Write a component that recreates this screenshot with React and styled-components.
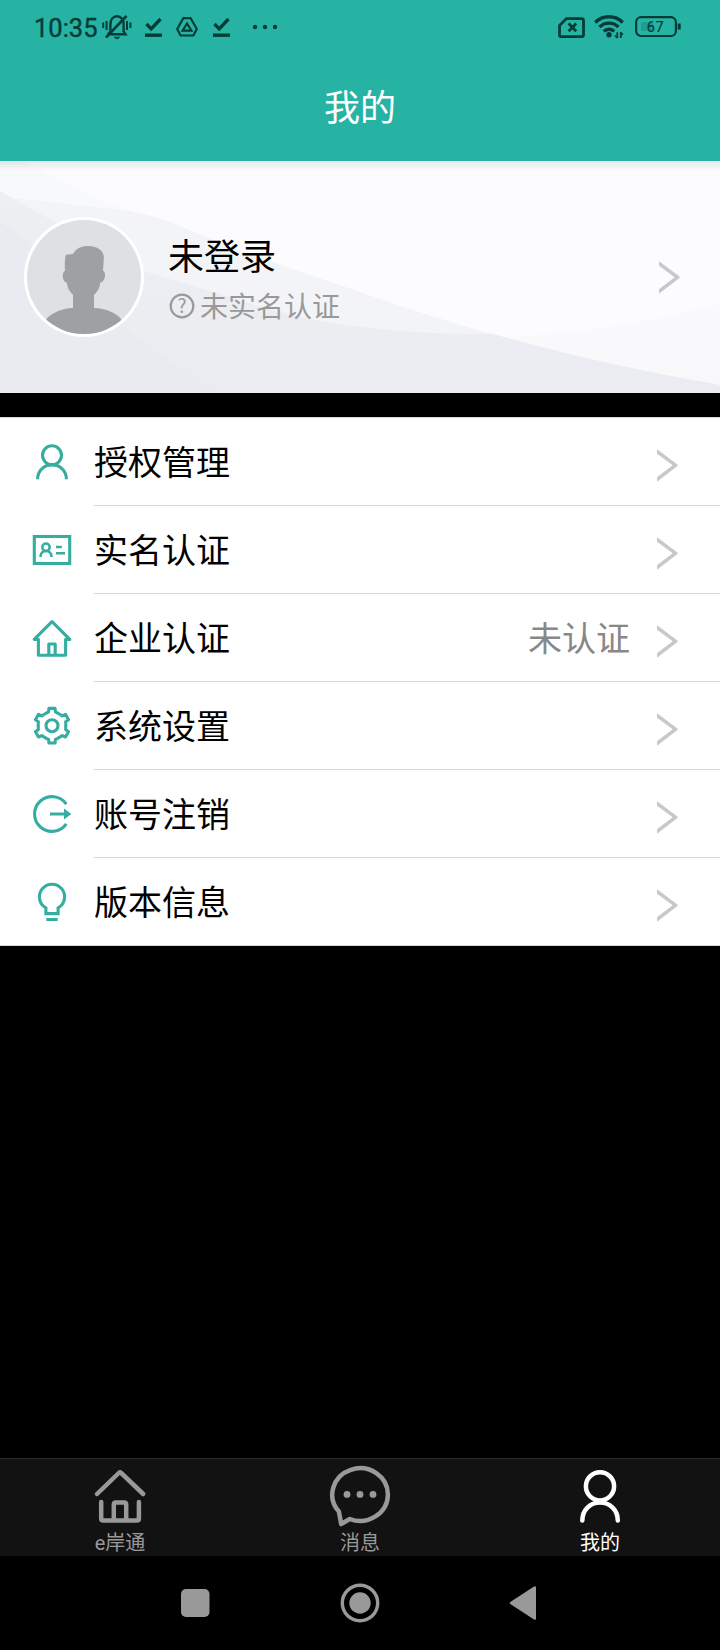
import React from "react";
import styled, { createGlobalStyle } from "styled-components";

const GlobalStyle = createGlobalStyle`
  body {
    margin: 0;
    background: #000;
    font-family: "Noto Sans CJK SC", sans-serif;
  }
`;

const Page = styled.div`
  display: flex;
  flex-direction: column;
  width: 720px;
  height: 1650px;
  background: #000;
`;

/* header */
const Header = styled.header`
  height: 161px;
  background: #27b3a4;
  color: #fff;
`;

const StatusBar = styled.div`
  display: flex;
  align-items: center;
  height: 54px;
  padding: 0 39px 0 34px;
  color: #043c37;
`;

const Clock = styled.span`
  width: 68px;
  font-family: Roboto, sans-serif;
  font-size: 25.5px;
  line-height: 30px;
  padding-top: 2px;
  -webkit-text-stroke: 0.4px #043c37;
`;

const StatusIcon = styled.svg`
  flex: none;
  width: ${props => props.$width}px;
  height: 30px;
  margin-right: ${props => props.$gap || 0}px;
  fill: none;
  stroke: currentColor;
  overflow: visible;
`;

const Spacer = styled.div`
  flex: 1;
`;

const Title = styled.h1`
  margin: 0;
  height: 107px;
  line-height: 102px;
  font-size: 36px;
  font-weight: 400;
  text-align: center;
`;

/* profile */
const Profile = styled.section`
  position: relative;
  display: flex;
  align-items: center;
  height: 232px;
  padding: 0 40px 0 24px;
  background: #fcfcfe;
  box-sizing: border-box;
`;

const Waves = styled.svg`
  position: absolute;
  top: 0;
  left: 0;
  width: 720px;
  height: 232px;
`;

const HeaderShadow = styled.div`
  position: absolute;
  top: 0;
  left: 0;
  right: 0;
  height: 10px;
  background: linear-gradient(rgba(0, 30, 40, 0.09), rgba(0, 30, 40, 0));
`;

const Avatar = styled.svg`
  position: relative;
  width: 120px;
  height: 120px;
`;

const ProfileText = styled.div`
  position: relative;
  flex: 1;
  margin-left: 24px;
  padding-top: 6px;
`;

const Name = styled.div`
  font-size: 36px;
  line-height: 50px;
  color: #000;
`;

const Verify = styled.div`
  display: flex;
  align-items: center;
  height: 53px;
  gap: 4px;
  font-size: 28px;
  line-height: 40px;
  color: #999;
`;

const HelpIcon = styled.svg`
  width: 28px;
  height: 28px;
  margin-top: 1px;
`;

const Arrow = styled.svg`
  position: relative;
  top: ${props => props.$drop || 0}px;
  width: 21px;
  height: 33px;
  fill: #c8c8c8;
`;

/* menu */
const Menu = styled.ul`
  list-style: none;
  margin: 24px 0 0;
  padding: 0;
  background: #fff;
  border-top: 1px solid #d9d9d9;
`;

const MenuItem = styled.li`
  display: flex;
  height: 88px;
  padding-left: 32px;
  gap: 22px;
  align-items: center;
  box-sizing: border-box;

  &:last-child {
    border-bottom: 1px solid #d9d9d9;
  }
`;

const MenuIcon = styled.svg`
  flex: none;
  width: 40px;
  height: 40px;
  fill: none;
  stroke: #35ada0;
  stroke-width: 3.1;
`;

const MenuBody = styled.div`
  flex: 1;
  display: flex;
  align-items: center;
  height: 100%;
  padding-right: 42px;
  border-bottom: 1px solid #d9d9d9;
  box-sizing: border-box;
  font-size: 34px;
  line-height: 50px;

  ${MenuItem}:last-child & {
    border-bottom: none;
  }
`;

const Label = styled.span`
  flex: 1;
  padding-bottom: 1px;
  color: #000;
`;

const Extra = styled.span`
  margin-right: 27px;
  padding-bottom: 1px;
  color: #888;
`;

/* bottom bars */
const TabBar = styled.nav`
  display: flex;
  height: 98px;
  margin-top: auto;
  background: #121212;
  border-top: 1px solid #2b2b2b;
  box-sizing: border-box;
`;

const Tab = styled.div`
  flex: 1;
  display: flex;
  flex-direction: column;
  align-items: center;
  padding-top: 7px;
  font-family: Roboto, "Noto Sans CJK SC", sans-serif;
  font-size: 20px;
  line-height: 34px;
  color: ${props => (props.$active ? "#fff" : "#999")};
`;

const TabIcon = styled.svg`
  flex: none;
  width: 60px;
  height: 60px;
  fill: none;
  stroke: currentColor;
  stroke-width: 4.5;
  stroke-linecap: round;
  stroke-linejoin: round;
  overflow: visible;
`;

const SystemNav = styled.div`
  display: flex;
  justify-content: center;
  align-items: center;
  gap: 125px;
  height: 94px;
`;

const NavIcon = styled.svg`
  width: 40px;
  height: 40px;
  fill: #999;
`;

// six-tooth gear outline around (20, 19.7)
const gearPoints = [0, 60, 120, 180, 240, 300]
  .flatMap(base =>
    [
      [-22, 13.9],
      [-14, 14.2],
      [-10, 17.6],
      [10, 17.6],
      [14, 14.2],
      [22, 13.9]
    ].map(([deg, r]) => {
      const a = ((base + deg - 90) * Math.PI) / 180;
      return `${(20 + r * Math.cos(a)).toFixed(2)},${(19.7 + r * Math.sin(a)).toFixed(2)}`;
    })
  )
  .join(" ");

const menuItems = [
  {
    label: "授权管理",
    icon: (
      <>
        <circle cx="20" cy="13.3" r="9.5" />
        <path d="M5.6 37.2C5.6 28.5 12 22.9 20 22.9S34.4 28.5 34.4 37.2" />
      </>
    )
  },
  {
    label: "实名认证",
    icon: (
      <>
        <rect x="2.3" y="6.5" width="35.4" height="27" />
        <circle cx="14" cy="17.2" r="3.7" strokeWidth="2.5" />
        <path
          d="M8.5 27C8.5 23 11 20.9 14 20.9S19.5 23 19.5 27M24 17H29.8M24 23.3H33"
          strokeWidth="2.5"
        />
      </>
    )
  },
  {
    label: "企业认证",
    extra: "未认证",
    icon: (
      <path
        d="M20 3.6L2.2 21.4H6.4V37.3H33.6V21.4H37.8ZM16.8 37V26H23.2V37"
        strokeLinejoin="round"
      />
    )
  },
  {
    label: "系统设置",
    icon: (
      <>
        <polygon points={gearPoints} strokeLinejoin="round" />
        <circle cx="20" cy="19.7" r="6" />
      </>
    )
  },
  {
    label: "账号注销",
    icon: (
      <>
        <path d="M34.3 10.1A17.4 17.4 0 1 0 34.3 29.9M18 20H33" />
        <path d="M32 14.6L39.3 20L32 25.4Z" fill="#35ada0" stroke="none" />
      </>
    )
  },
  {
    label: "版本信息",
    icon: (
      <path d="M13.9 31.6V25.9A12.6 12.6 0 1 1 26.1 25.9V31.6ZM14.3 37.5H25.7" />
    )
  }
];

const tabs = [
  {
    label: "e岸通",
    icon: (
      <path d="M7 28L28.8 7Q30 5.8 31.2 7L53.2 28M11.2 36V52.5Q11.2 54.6 13.3 54.6H46.8Q48.9 54.6 48.9 52.5V36M23.8 54V38.5Q23.8 36.4 25.9 36.4H34.1Q36.2 36.4 36.2 38.5V54" />
    )
  },
  {
    label: "消息",
    icon: (
      <>
        <path d="M8.9 45.6A27.8 26.3 0 1 1 19.8 53L11.2 58Z" />
        <g fill="currentColor" stroke="none">
          <circle cx="17" cy="28.4" r="3.4" />
          <circle cx="30" cy="28.4" r="3.4" />
          <circle cx="43" cy="28.4" r="3.4" />
        </g>
      </>
    )
  },
  {
    label: "我的",
    active: true,
    icon: (
      <>
        <circle cx="30" cy="20.3" r="14.1" />
        <path d="M12.3 54.6C12.3 44 20 36.6 30 36.6S47.8 44 47.8 54.6" />
      </>
    )
  }
];

function Chevron({ drop }) {
  return (
    <Arrow $drop={drop} viewBox="0 0 21 33">
      <path d="M0 .3L20.5 15.5V17.1L0 32.7V28.3L15.7 16.3L0 4.7Z" />
    </Arrow>
  );
}

function DownloadDone({ gap }) {
  return (
    <StatusIcon $width={17} $gap={gap} viewBox="0 0 17 30">
      <path d="M1.5 12L6.2 16.8L15.5 7" strokeWidth="3.3" />
      <path d="M0 23.2H17" strokeWidth="3.4" />
    </StatusIcon>
  );
}

function Status() {
  return (
    <StatusBar>
      <Clock>10:35</Clock>
      <StatusIcon $width={29} $gap={14} viewBox="0 0 29 30">
        <path
          d="M8 22.2H23.5L21.6 19.5V12.5C21.6 7.5 19 4.2 15 4.2S8.4 7.5 8.4 12.5V19.5L6 22.2"
          strokeWidth="2.4"
        />
        <path d="M4 25.5L24.5 4" strokeWidth="2.6" />
        <path d="M11.5 24.8H18.5Q15 29.5 11.5 24.8Z" fill="currentColor" stroke="none" />
        <path d="M1.2 10.5V16M4.6 9V18M25 9V18M28.4 10.5V16" strokeWidth="2" />
      </StatusIcon>
      <DownloadDone gap={14} />
      <StatusIcon $width={22} $gap={15} viewBox="0 0 22 30">
        <path
          d="M7.3 6.2H14.7L20.8 17L17.4 23.5H4.6L1.2 17Z"
          strokeWidth="2.2"
          strokeLinejoin="round"
        />
        <path d="M11 11.5L15.4 18.6H6.6Z" strokeWidth="2.2" />
      </StatusIcon>
      <DownloadDone gap={22} />
      <StatusIcon $width={25} viewBox="0 0 25 30">
        <g fill="currentColor" stroke="none">
          <circle cx="3" cy="15" r="2.2" />
          <circle cx="13" cy="15" r="2.2" />
          <circle cx="23" cy="15" r="2.2" />
        </g>
      </StatusIcon>
      <Spacer />
      <StatusIcon $width={27} $gap={9} viewBox="0 0 27 30">
        <path
          d="M8.5 6.6H23.5Q25.5 6.6 25.5 8.6V22.7Q25.5 24.7 23.5 24.7H3.5Q1.5 24.7 1.5 22.7V13.5Z"
          strokeWidth="2.8"
          strokeLinejoin="round"
        />
        <path d="M10.6 11.6L18.2 19.3M18.2 11.6L10.6 19.3" strokeWidth="2.8" />
      </StatusIcon>
      <StatusIcon $width={30} $gap={11} viewBox="0 0 30 30">
        <path
          d="M1.2 10.5A19.6 19.6 0 0 1 28.8 10.5M5.5 15A13.6 13.6 0 0 1 24.5 15M9.8 19.4A7.4 7.4 0 0 1 20.2 19.4"
          strokeWidth="3.4"
        />
        <circle cx="15" cy="22.8" r="2.7" fill="currentColor" stroke="none" />
        <path d="M23.3 20.3V26M26.8 20.3V26" strokeWidth="1.8" />
        <path d="M21 23.5L23.3 26M29 22.8L26.8 20.3" strokeWidth="1.4" />
      </StatusIcon>
      <StatusIcon $width={46} viewBox="0 0 46 30">
        <rect x="6" y="10" width="12" height="9" fill="#1c9f92" stroke="none" />
        <rect x="1.1" y="5.2" width="39.8" height="18.8" rx="5" strokeWidth="2.2" />
        <path d="M44.2 11.5V17.5" strokeWidth="3" />
        <text
          x="20.5"
          y="20"
          textAnchor="middle"
          fontFamily="Roboto"
          fontSize="14.5"
          letterSpacing=".5"
          fill="currentColor"
          stroke="currentColor"
          strokeWidth=".2"
        >
          67
        </text>
      </StatusIcon>
    </StatusBar>
  );
}

function ProfileCard() {
  return (
    <Profile>
      <Waves viewBox="0 0 720 232">
        <defs>
          <linearGradient id="hill" x1="0" y1="0" x2="0" y2="1">
            <stop offset="0" stopColor="#fafafc" />
            <stop offset="1" stopColor="#f8f8fb" />
          </linearGradient>
          <linearGradient id="low" x1="0" y1="0" x2="0" y2="1">
            <stop offset="0" stopColor="#eeeff3" />
            <stop offset="1" stopColor="#ebecf1" />
          </linearGradient>
        </defs>
        <path d="M0 0H25Q75 30 130 50L60 90H0Z" fill="#f8f9fb" />
        <path d="M500 176Q610 172 720 142V232H500Z" fill="url(#hill)" />
        <path
          d="M0 36L13 37L130 50Q150 54 170 61L243 91L360 131Q427 155 493 173Q603 204 720 224V232H0Z"
          fill="#f3f4f8"
        />
        <path
          d="M0 30Q70 70 147 111Q190 124 217 132Q300 160 360 166Q430 174 493 173Q603 204 720 224V232H0Z"
          fill="url(#low)"
        />
        <path d="M0 61Q35 82 60 108Q140 185 217 232H0Z" fill="#eaebf0" />
      </Waves>
      <HeaderShadow />
      <Avatar viewBox="0 0 120 120">
        <clipPath id="face">
          <circle cx="60" cy="60" r="57" />
        </clipPath>
        <circle cx="60" cy="60" r="60" fill="#fff" />
        <circle cx="60" cy="60" r="57" fill="#dde1e3" />
        <path
          clipPath="url(#face)"
          fill="#9da1a4"
          d="M41 54C40.6 48 40.8 42 41.8 37.8L49 37C52 31 58 29 64 29C74 29 80.5 34 79.8 42L79 53.5C82.5 55 81.5 64.5 76.3 65.7C75.3 71.5 73.5 75 70 77.8V91C82 91.5 91 95 97.5 102.5V120H22V102.5C28 95.5 38 91.5 49 91V77.8C45.8 75 43.7 71.5 42.7 65.7C38 64.5 37.5 55 41 54Z"
        />
      </Avatar>
      <ProfileText>
        <Name>未登录</Name>
        <Verify>
          <HelpIcon viewBox="0 0 28 28">
            <circle cx="14" cy="14" r="11.3" fill="none" stroke="#999" strokeWidth="2.2" />
            <text
              x="14"
              y="20.7"
              textAnchor="middle"
              fontFamily="Noto Sans CJK SC"
              fontSize="19"
              fill="#999"
            >
              ?
            </text>
          </HelpIcon>
          <span>未实名认证</span>
        </Verify>
      </ProfileText>
      <Chevron />
    </Profile>
  );
}

function App() {
  return (
    <Page>
      <GlobalStyle />
      <Header>
        <Status />
        <Title>我的</Title>
      </Header>
      <ProfileCard />
      <Menu>
        {menuItems.map(item => (
          <MenuItem key={item.label}>
            <MenuIcon viewBox="0 0 40 40">{item.icon}</MenuIcon>
            <MenuBody>
              <Label>{item.label}</Label>
              {item.extra && <Extra>{item.extra}</Extra>}
              <Chevron drop={4} />
            </MenuBody>
          </MenuItem>
        ))}
      </Menu>
      <TabBar>
        {tabs.map(tab => (
          <Tab key={tab.label} $active={tab.active}>
            <TabIcon viewBox="0 0 60 60">{tab.icon}</TabIcon>
            <span>{tab.label}</span>
          </Tab>
        ))}
      </TabBar>
      <SystemNav>
        <NavIcon viewBox="0 0 40 40">
          <rect x="6" y="6" width="28.5" height="28" rx="5" />
        </NavIcon>
        <NavIcon viewBox="0 0 40 40">
          <circle cx="20" cy="20" r="17.7" fill="none" stroke="#999" strokeWidth="3.4" />
          <circle cx="20" cy="20" r="10.7" />
        </NavIcon>
        <NavIcon viewBox="0 0 40 40">
          <path d="M5.3 18.9L29 3.5Q31 2.5 31 4.5V35.5Q31 37.5 29 36.5L5.3 21.1Q4 20 5.3 18.9Z" />
        </NavIcon>
      </SystemNav>
    </Page>
  );
}

export default App;
